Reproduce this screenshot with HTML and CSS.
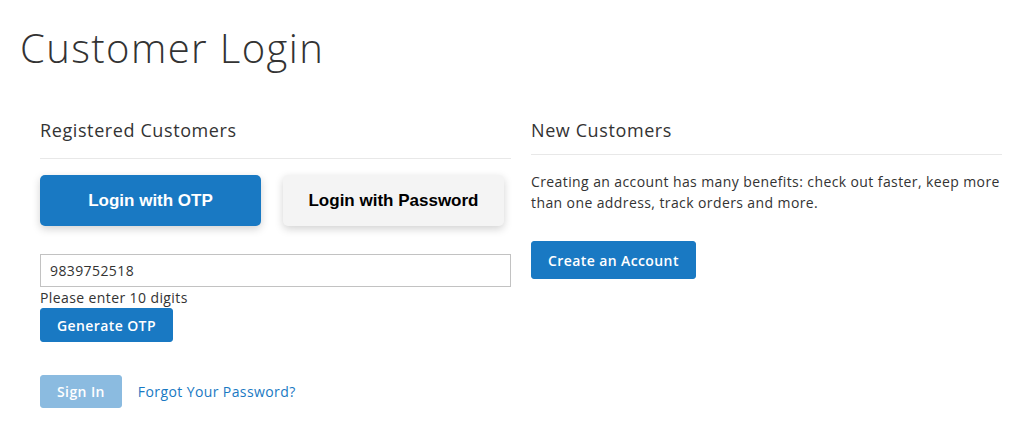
FILE: index.html
```html
<!DOCTYPE html>
<html lang="en">
<head>
    <meta charset="UTF-8">
    <meta name="viewport" content="width=device-width, initial-scale=1.0">
    <title>Customer Login</title>
    <link rel="stylesheet" href="styles.css">
</head>
<body>

    <h1 class="page-title">Customer Login</h1>

    <div class="login-container">
        <div class="block block-login">
            <div class="block-title">Registered Customers</div>
            <div class="otp-tabs">
                <button class="tab active">Login with OTP</button>
                <button class="tab">Login with Password</button>
            </div>
            <div class="field">
                <input type="text" class="input-text" value="9839752518">
                <div class="note">Please enter 10 digits</div>
                <button class="action primary small">Generate OTP</button>
            </div>
            <div class="actions">
                <button class="action primary disabled">Sign In</button>
                <a href="#" class="remind">Forgot Your Password?</a>
            </div>
        </div>

        <div class="block block-new">
            <div class="block-title">New Customers</div>
            <p>Creating an account has many benefits: check out faster, keep more than one address, track orders and more.</p>
            <button class="action primary create">Create an Account</button>
        </div>
    </div>

</body>
</html>
```

FILE: styles.css
```css
body {
    font-family: "Open Sans", sans-serif;
    font-size: 14px;
    letter-spacing: 0.4px;
    color: #333;
    margin: 0;
    padding: 0 22px 0 20px;
}
.page-title {
    font-weight: 300;
    font-size: 40px;
    line-height: 48px;
    letter-spacing: 1.4px;
    margin: 24px 0 0 0;
    color: #333;
}
.login-container {
    display: grid;
    grid-template-columns: 1fr 1fr;
    gap: 20px;
    padding-left: 20px;
    margin-top: 46px;
}
.block-title {
    font-size: 18px;
    line-height: 24px;
    letter-spacing: 0.6px;
    padding-bottom: 16px;
    border-bottom: 1px solid #e8e8e8;
}
.block-new .block-title {
    padding-bottom: 12px;
}
.otp-tabs {
    display: flex;
    gap: 22px;
    margin-top: 16px;
}
.tab {
    width: 221px;
    height: 51px;
    border: none;
    border-radius: 5px;
    background: #f4f4f4;
    color: #000;
    font-family: Arial, "Liberation Sans", sans-serif;
    font-weight: bold;
    font-size: 17px;
    letter-spacing: 0;
    box-shadow: 0 3px 8px rgba(0, 0, 0, 0.18);
    cursor: pointer;
}
.tab.active {
    background: #1979c3;
    color: #fff;
}
.field {
    margin-top: 28px;
}
.input-text {
    display: block;
    box-sizing: border-box;
    width: 100%;
    height: 33px;
    border: 1px solid #c2c2c2;
    padding: 0 9px;
    font-family: "Open Sans", sans-serif;
    font-size: 14px;
    letter-spacing: 0.4px;
    color: #333;
}
.note {
    line-height: 20px;
    margin-top: 1px;
}
.action.primary {
    background: #1979c3;
    border: 1px solid #1979c3;
    border-radius: 3px;
    color: #fff;
    font-family: "Open Sans", sans-serif;
    font-weight: 600;
    font-size: 14px;
    letter-spacing: 0.4px;
    padding: 0 16px;
    cursor: pointer;
}
.small {
    height: 34px;
}
.actions {
    display: flex;
    align-items: center;
    gap: 16px;
    margin-top: 33px;
}
.disabled {
    height: 33px;
    opacity: 0.5;
}
.remind {
    color: #1979c3;
    text-decoration: none;
}
.block-new p {
    line-height: 21px;
    margin: 16px 0 0 0;
}
.create {
    height: 38px;
    margin-top: 28px;
}
```
